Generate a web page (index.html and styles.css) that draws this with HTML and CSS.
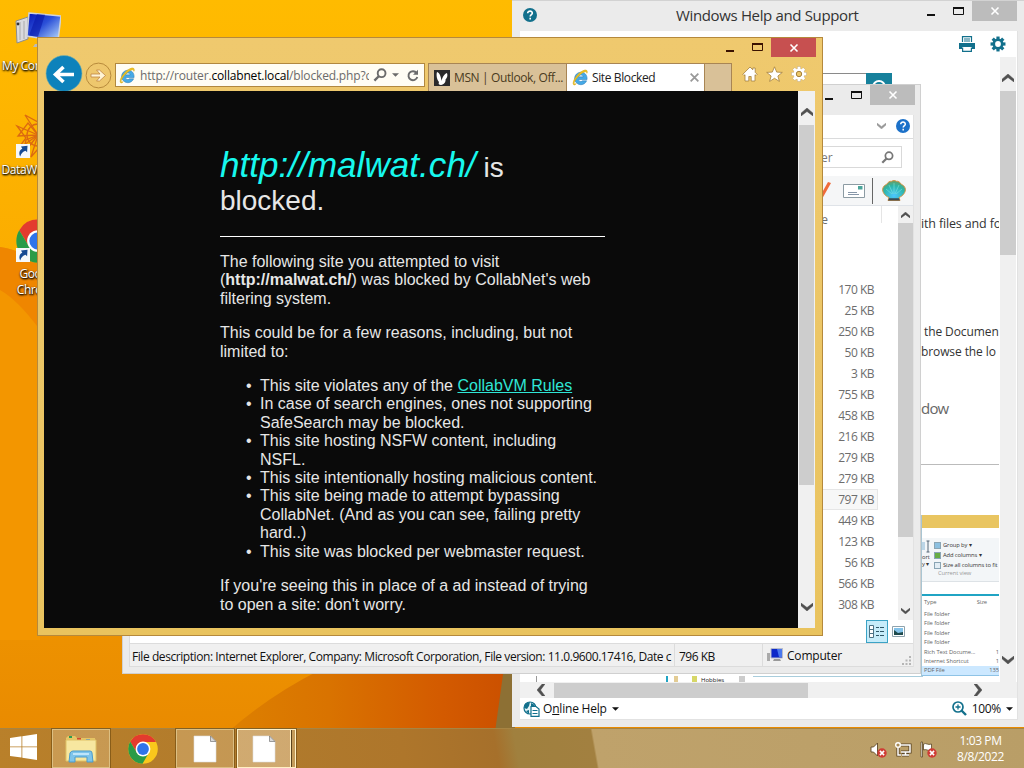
FILE: index.html
```html
<!DOCTYPE html>
<html lang="en">
<head>
  <meta charset="UTF-8">
  <meta name="viewport" content="width=device-width, initial-scale=1.0">
  <title>Site Blocked</title>
  <link rel="stylesheet" href="styles.css">
</head>
<body>
  <svg class="defs" width="0" height="0">
    <defs>
      <linearGradient id="screen" x1="0" y1="0" x2="1" y2="1">
        <stop offset="0" stop-color="#0714b4"/><stop offset=".45" stop-color="#2b50d8"/><stop offset="1" stop-color="#c3e6ff"/>
      </linearGradient>
      <linearGradient id="sky" x1="0" y1="0" x2="0" y2="1">
        <stop offset="0" stop-color="#ffbb00"/><stop offset=".35" stop-color="#fbac00"/><stop offset="1" stop-color="#e88800"/>
      </linearGradient>
      <linearGradient id="dune" x1="0" y1="0" x2="1" y2="0">
        <stop offset="0" stop-color="#dd8000"/><stop offset=".35" stop-color="#d97300"/><stop offset=".75" stop-color="#d35a00"/><stop offset="1" stop-color="#ca4f00"/>
      </linearGradient>
      <radialGradient id="shell" cx=".5" cy=".75" r=".7">
        <stop offset="0" stop-color="#4cc6ff"/><stop offset=".7" stop-color="#2cb5a8"/><stop offset="1" stop-color="#63a06d"/>
      </radialGradient>
    </defs>
    <symbol id="min" viewBox="0 0 10 10"><path d="M1 9h8" stroke="currentColor" stroke-width="2"/></symbol>
    <symbol id="max" viewBox="0 0 11 10"><path d="M.5 1.500h10v7H.5z" fill="none" stroke="currentColor"/><path d="M0 2h11" stroke="currentColor" stroke-width="2"/></symbol>
    <symbol id="x" viewBox="0 0 10 10"><path d="M1.500 1.500l7 7m0-7l-7 7" stroke="currentColor" stroke-width="1.600"/></symbol>
    <symbol id="up" viewBox="0 0 12 8"><path d="M0 8V5.200L6 0l6 5.200V8L6 3.500z" fill="currentColor" stroke="currentColor" stroke-width=".5"/></symbol>
    <symbol id="down" viewBox="0 0 12 8"><path d="M0 0v2.800L6 8l6-5.200V0L6 4.500z" fill="currentColor" stroke="currentColor" stroke-width=".5"/></symbol>
    <symbol id="left" viewBox="0 0 8 12"><path d="M8 0H5.200L0 6l5.200 6H8L3.500 6z" fill="currentColor" stroke="currentColor" stroke-width=".5"/></symbol>
    <symbol id="right" viewBox="0 0 8 12"><path d="M0 0h2.800L8 6l-5.200 6H0l4.500-6z" fill="currentColor" stroke="currentColor" stroke-width=".5"/></symbol>
    <symbol id="caret" viewBox="0 0 8 4"><path d="M0 0h8L4 4z" fill="currentColor"/></symbol>
    <symbol id="lens" viewBox="0 0 14 14"><circle cx="8.600" cy="5.200" r="3.900" fill="none" stroke="currentColor" stroke-width="1.900"/><path d="M6 8l-4.600 4.600" stroke="currentColor" stroke-width="2.400"/></symbol>
    <symbol id="ie" viewBox="0 0 16 16">
      <path d="M14.200 9.900H6.100c.1 2.100 2.700 2.500 3.700 1.200h4C12.600 13.600 10.700 14.800 8.300 14.800A6 6 0 0 1 2.400 8.900 6 6 0 0 1 8.300 3c3.700 0 6.200 2.500 5.900 6.900zM6.200 7.400h4.300c-.2-2.200-4-2.200-4.300 0z" fill="#45a9e6" stroke="#2878b8" stroke-width=".5"/>
      <path d="M1.600 14.800C-.7 12.400 5.500 3.100 11.300 1.200c2.700-.8 3.500.5 2.700 2.800.1-1.200-.6-1.900-2.400-1.200C7.200 4.400 1.600 11.500 2 13.600c.1.700.9.700 2 .2-.9.800-1.900 1.500-2.400 1z" fill="#efc321" stroke="#d9ab18" stroke-width=".6"/>
    </symbol>
    <symbol id="chrome" viewBox="0 0 30 30">
      <circle cx="15" cy="15" r="14.800" fill="#f9c81c"/>
      <path d="M15 .2A14.800 14.800 0 0 0 2.200 7.600L9 19l6-11h13A14.800 14.800 0 0 0 15 .2z" fill="#e33b2e"/>
      <path d="M2.200 7.600A14.800 14.800 0 0 0 14.500 29.800L21 18.500l-12 .5z" fill="#2a9b47"/>
      <circle cx="15" cy="15" r="7.400" fill="#fff"/><circle cx="15" cy="15" r="5.900" fill="#2f74ea"/>
    </symbol>
    <symbol id="shortcut" viewBox="0 0 14 14"><path d="M0 0h14v14H0z" fill="#f6f8fa"/><path d="M4.200 12.500C2.500 9 3.500 5.800 6.300 4.800L5 2.600 11.500 1.800l-.4 6.500-1.600-1.600c-2.600.8-4.200 2.500-5.300 5.800z" fill="#174a92"/></symbol>
    <symbol id="page" viewBox="0 0 24 28"><path d="M1 1h16.500L23 6.500V27H1z" fill="#fff" stroke="#ddd" stroke-width=".6"/><path d="M17.500 1L23 6.500h-5.500z" fill="#d9d9d9" stroke="#777" stroke-width=".7"/></symbol>
    <symbol id="gear" viewBox="0 0 18 18"><g fill="currentColor"><circle cx="9" cy="9" r="6.200"/><path d="M7.200.6h3.600v16.800H7.200z"/><path d="M7.200.6h3.600v16.800H7.200z" transform="rotate(45 9 9)"/><path d="M7.200.6h3.600v16.800H7.200z" transform="rotate(90 9 9)"/><path d="M7.200.6h3.600v16.800H7.200z" transform="rotate(135 9 9)"/></g></symbol>
    <symbol id="nope" viewBox="0 0 10 10"><circle cx="5" cy="5" r="4.700" fill="#cf3c35"/><path d="M2.900 2.900l4.200 4.200m0-4.200L2.900 7.100" stroke="#fff" stroke-width="1.500"/></symbol>
  </svg>

  <div class="desktop">
    <svg class="wallpaper" viewBox="0 0 1024 768" preserveAspectRatio="none">
      <path d="M0 0h1024v768H0z" fill="url(#sky)"/>
      <path d="M0 247Q20 250 40 263V640H0z" fill="#f39600"/>
      <path d="M0 247Q20 250 40 263V330Q18 300 0 290z" fill="#ef8600"/>
      <path d="M228 732Q270 695 320 670H515V732z" fill="url(#dune)"/>
      <path d="M505 660h10v72H495z" fill="#8d7034"/>
    </svg>

    <div class="icons">
      <div class="icon">
        <svg width="46" height="40" viewBox="0 0 46 40">
          <path d="M1 12l12-4v22L2 34z" fill="#d9dadd" stroke="#8d8d8d"/><path d="M5 13v18M9 12v18" stroke="#aaa"/><circle cx="3" cy="15" r="1.400" fill="#333"/>
          <path d="M14 4l32 3-3 25-31-5z" fill="url(#screen)" stroke="#cfd3dd" stroke-width="1.500"/><path d="M22 5l8 .8-7 22-9-1.300z" fill="#0818a8" opacity=".6"/>
          <path d="M20 35h12l2 3H18z" fill="#bbb"/>
        </svg>
        <span>My Computer</span>
      </div>
      <div class="icon wolf">
        <svg width="46" height="50" viewBox="0 0 46 50">
          <g fill="none" stroke="#dc6a10" stroke-width="1.300"><path d="M23 23L10 3l13 7L37 3zM23 23L2 14l9 12-9 12zM23 23l-7 22 7-8 8 8zM23 23l21-9-8 12 8 12z"/><path d="M23 23L3 24l10-13zM23 23L24 3l9 11zM23 23L8 42l3-14z"/><circle cx="23" cy="23" r="11"/></g>
        </svg>
        <svg class="arrow" width="14" height="14"><use href="#shortcut"/></svg>
        <span>DataWorks FX</span>
      </div>
      <div class="icon goog">
        <svg width="44" height="44"><use href="#chrome"/></svg>
        <svg class="arrow" width="14" height="14"><use href="#shortcut"/></svg>
        <span>Google<br>Chrome</span>
      </div>
    </div>

    <div class="window help">
      <div class="titlebar">
        <svg width="14" height="14" viewBox="0 0 14 14"><circle cx="7" cy="7" r="7" fill="#12708c"/><path d="M4.700 5.300c0-3 4.700-2.800 4.600-.1C9.300 6.600 7.200 6.800 7.200 8.600M7.200 9.700v1.700" fill="none" stroke="#fff" stroke-width="1.600"/></svg>
        <span class="title">Windows Help and Support</span>
        <div class="controls"><svg><use href="#min"/></svg><svg><use href="#max"/></svg><b class="close"><svg><use href="#x"/></svg></b></div>
      </div>
      <div class="help-body">
        <div class="help-tools">
          <div class="rounds"><i></i><i></i></div>
          <svg width="16" height="16" viewBox="0 0 16 16"><path d="M3.500 6V.6h9V6M5 3h6M5 5h6" fill="none" stroke="#12708c" stroke-width="1.200"/><path d="M0 7h16v6h-3v-2H3v2H0z" fill="#12708c"/><path d="M3.600 11.500v3.900h8.800v-3.900" fill="none" stroke="#12708c" stroke-width="1.200"/></svg>
          <svg class="teal" width="16" height="16"><use href="#gear"/><circle cx="8" cy="8" r="2.900" fill="#fff"/></svg>
        </div>
        <div class="help-main">
          <div class="doc">
            <div class="help-search"><span><svg width="16" height="16" viewBox="0 0 16 16"><circle cx="8" cy="8" r="6" fill="none" stroke="#fff" stroke-width="2"/></svg></span></div>
            <div class="doc-text">
              <p class="p1">ith files and fo</p>
              <p class="p2">&nbsp;the Documen<br>browse the lo</p>
              <h3>dow</h3>
              <hr>
              <div class="pic">
                <div class="pic-title"></div>
                <div class="pic-ribbon">
                  <div class="sort"><svg width="8" height="14" viewBox="0 0 8 14"><path d="M0 2h3v8H0z" fill="#bcd5e6"/><path d="M6 1v11M4.500 1h3m-3 11h3" stroke="#567" fill="none"/></svg>ort<br>y ▾</div>
                  <div class="cmds"><p><i class="c1"></i>Group by ▾</p><p><i class="c2"></i>Add columns ▾</p><p><i class="c3"></i>Size all columns to fit</p><em>Current view</em></div>
                </div>
                <div class="pic-list">
                  <div class="ph"><span>Type</span><span>Size</span></div>
                  <div>File folder</div><div>File folder</div><div>File folder</div><div>File folder</div>
                  <div>Rich Text Docume...<span>1</span></div><div>Internet Shortcut<span>1</span></div><div class="sel">PDF File<span>135</span></div>
                </div>
              </div>
            </div>
            <div class="strip"><i class="s1"></i><i class="s2"></i><i class="s3"></i><span>Hobbies</span><i class="s4"></i><i class="s5"></i></div>
          </div>
          <div class="vscroll"><svg width="12" height="8"><use href="#up"/></svg><i class="thumb"></i><svg class="end" width="12" height="8"><use href="#down"/></svg></div>
        </div>
        <div class="hscroll"><svg width="8" height="12"><use href="#left"/></svg><i class="thumb"></i><svg class="end" width="8" height="12"><use href="#right"/></svg></div>
        <div class="help-foot">
          <svg width="17" height="16" viewBox="0 0 17 16"><circle cx="7" cy="7" r="6" fill="#e5f3f5" stroke="#12708c" stroke-width="1.200"/><path d="M2 3l5-2-1 4-2 3-3-1zM8 2l4 2-2 3-2-1zM3 10l3-1v4z" fill="#12708c"/><path d="M8 5.500h5l3 2.500v7.400H8z" fill="#fff" stroke="#12708c" stroke-width="1.200"/><path d="M9.500 9.500h5m-5 3h5" stroke="#12708c"/></svg>
          <span class="online">O<u>n</u>line Help</span><svg width="7" height="4"><use href="#caret"/></svg>
          <svg class="zoomer" width="15" height="15" viewBox="0 0 15 15"><circle cx="6" cy="6" r="5" fill="none" stroke="#12708c" stroke-width="1.700"/><path d="M6 3.500v5M3.500 6h5" stroke="#12708c" stroke-width="1.300"/><path d="M9.500 9.500l4.500 4.500" stroke="#12708c" stroke-width="2.400"/></svg>
          <span class="pct">100%</span><svg width="7" height="4"><use href="#caret"/></svg>
        </div>
      </div>
    </div>

    <div class="window explorer">
      <div class="titlebar"><div class="controls"><svg><use href="#min"/></svg><svg><use href="#max"/></svg><b class="close"><svg><use href="#x"/></svg></b></div></div>
      <div class="ex-body">
        <div class="ex-menu">
          <svg class="chev" width="9" height="6"><use href="#down"/></svg>
          <svg width="14" height="14" viewBox="0 0 14 14"><circle cx="7" cy="7" r="7" fill="#1c71c9"/><path d="M4.700 5.300c0-3 4.700-2.800 4.600-.1C9.300 6.600 7.200 6.800 7.200 8.600M7.200 9.700v1.700" fill="none" stroke="#fff" stroke-width="1.500"/></svg>
        </div>
        <div class="ex-search"><div><span>er</span><svg width="13" height="13"><use href="#lens"/></svg></div></div>
        <div class="ex-tools">
          <svg width="14" height="22" viewBox="0 0 14 22"><path d="M1 18L10 2l3 1-9 16-3 2z" fill="#ef6b3a"/></svg>
          <svg class="mail" width="22" height="14" viewBox="0 0 22 14"><path d="M.5.500h21v13H.5z" fill="#fff" stroke="#8c9ba3"/><path d="M15 2h4.500v3.500H15z" fill="#4aa59a"/><path d="M5 8.500h9M5 10.500h11" stroke="#8796a8"/></svg>
          <i></i>
          <svg width="24" height="21" viewBox="0 0 24 21"><path d="M6 20.500l1-3C3 16 0 12 .7 8.500 1.500 6 3 5 4.500 4.500 6 2 8 1 9.500 1.300 11 .3 13 .3 14.500 1.300 16 1 18 2 19.500 4.500 21 5 22.500 6 23.300 8.500 24 12 21 16 17 17.500l1 3z" fill="url(#shell)" stroke="#d59548"/><path d="M12 14V3M11 14L7 5M13 14l4-9M10 14L4 9M14 14l6-5" stroke="#7fe6dc" stroke-width=".7" opacity=".8"/><path d="M7 18.200h10l1 2.300H6z" fill="#3b4b55"/></svg>
        </div>
        <div class="ex-list">
          <div class="col">
            <div class="col-head">Size</div>
            <ul>
              <li>170 KB</li><li>25 KB</li><li>250 KB</li><li>50 KB</li><li>3 KB</li><li>755 KB</li><li>458 KB</li><li>216 KB</li>
              <li>279 KB</li><li>279 KB</li><li class="hover">797 KB</li><li>449 KB</li><li>123 KB</li><li>56 KB</li><li>566 KB</li><li>308 KB</li>
            </ul>
          </div>
          <div class="vscroll"><svg width="9" height="6"><use href="#up"/></svg><i class="thumb"></i><svg class="end" width="9" height="6"><use href="#down"/></svg></div>
        </div>
        <div class="ex-views">
          <b><svg width="16" height="13" viewBox="0 0 16 13"><path d="M.5.500h4v12h-4zM.5 4.500h4m-4 4h4" fill="#fff" stroke="#4c7285"/><path d="M7 2.500h3m1 0h4M7 6.500h3m1 0h4M7 10.500h3m1 0h4" stroke="#2f5667"/></svg></b>
          <svg width="13" height="11" viewBox="0 0 13 11"><path d="M.5.500h12v10H.5z" fill="#fff" stroke="#8fa3ad"/><path d="M2 2h9v7H2z" fill="#84c3ea"/><path d="M2 9V4l4 3 5-1v3z" fill="#1f4a4c"/></svg>
        </div>
        <div class="ex-status">
          <span class="desc">File description: Internet Explorer, Company: Microsoft Corporation, File version: 11.0.9600.17416, Date c</span>
          <span class="size">796 KB</span>
          <span class="zone"><svg width="16" height="14" viewBox="0 0 16 14"><path d="M0 5h3v8H0z" fill="#aaa"/><path d="M4 .5h11.500v9.500H4z" fill="#0d28c8" stroke="#b8bccb"/><path d="M10 1h5v8h-3z" fill="#4a78ee"/><path d="M7 11h6l1 2H6z" fill="#999"/></svg>Computer</span>
          <svg class="grip" width="9" height="9" viewBox="0 0 9 9"><path d="M7 0h2v2H7zM7 3.500h2v2H7zM7 7h2v2H7zM3.500 3.500h2v2h-2zM3.500 7h2v2h-2zM0 7h2v2H0z" fill="#b5b5b5"/></svg>
        </div>
      </div>
    </div>

    <div class="window browser">
      <div class="titlebar"><div class="controls"><svg><use href="#min"/></svg><svg><use href="#max"/></svg><b class="close"><svg><use href="#x"/></svg></b></div></div>
      <div class="nav">
        <svg class="back" width="38" height="36" viewBox="0 0 38 36"><circle cx="19" cy="18.500" r="18" fill="#0d82bb" stroke="#7db4a8" stroke-width=".6"/><path d="M29 19.500H11M18.500 12l-8 7.500 8 7.500" fill="none" stroke="#fff" stroke-width="3.600"/></svg>
        <svg class="fwd" width="27" height="27" viewBox="0 0 27 27"><circle cx="13.500" cy="13.500" r="12.400" fill="#eec76d" stroke="#b88b3c"/><path d="M6 12h9l-3.500-4h3L20.500 13.500 14.500 19h-3l3.500-4H6z" fill="#fff4d5" stroke="#bf8545" stroke-width=".8"/></svg>
        <div class="address">
          <svg width="17" height="17"><use href="#ie"/></svg>
          <span class="url">http://router.<b>collabnet.local</b>/blocked.php?c</span>
          <svg class="find" width="14" height="14"><use href="#lens"/></svg>
          <svg width="7" height="4"><use href="#caret"/></svg>
          <svg class="reload" width="12" height="13" viewBox="0 0 12 13"><path d="M9.600 4A4.500 4.500 0 1 0 10.300 8" fill="none" stroke="currentColor" stroke-width="1.900"/><path d="M11 .8v5H6z" fill="currentColor"/></svg>
        </div>
        <div class="tabs">
          <div class="tab">
            <svg width="16" height="16" viewBox="0 0 16 16"><path d="M0 0h16v16H0z" fill="#29292b"/><path d="M7 15c-2 0-3-1-2-3C3 10 2 5 3 2c3 1 4 5 4.500 9C8 8 10 4 13 3c1 3 0 5-1.500 6.500C12 12 10 14.500 7 15z" fill="#fff"/></svg>
            <span>MSN | Outlook, Off...</span>
          </div>
          <div class="tab on">
            <svg width="17" height="17"><use href="#ie"/></svg>
            <span>Site Blocked</span>
            <svg class="tx" width="11" height="11"><use href="#x"/></svg>
          </div>
          <div class="tab new"></div>
        </div>
        <div class="tools">
          <svg width="16" height="16" viewBox="0 0 16 16"><path d="M8 1L.8 8.300 2 9.500l1-.8V15h3.800v-4.500h2.400V15H13V8.700l1 .8 1.200-1.200-2-2V2h-2.400v1.800z" fill="#fff" stroke="#a5803c" stroke-width=".8"/></svg>
          <svg width="17" height="16" viewBox="0 0 17 16"><path d="M8.500.8l2.200 5.300 5.600.3-4.400 3.600 1.500 5.400-4.900-3.100-4.900 3.100 1.500-5.400L.7 6.400l5.600-.3z" fill="#fff" stroke="#a5803c" stroke-width=".8"/></svg>
          <svg class="cog" width="16" height="16"><use href="#gear"/><circle cx="8" cy="8" r="2.700" fill="#ecc769" stroke="#a5803c"/></svg>
        </div>
      </div>
      <div class="view">
        <div class="page">
          <h1><em>http://malwat.ch/</em> is blocked.</h1>
          <hr>
          <p>The following site you attempted to visit (<b>http://malwat.ch/</b>) was blocked by CollabNet's web filtering system.</p>
          <p>This could be for a few reasons, including, but not limited to:</p>
          <ul>
            <li>This site violates any of the <a href="#">CollabVM Rules</a></li>
            <li>In case of search engines, ones not supporting SafeSearch may be blocked.</li>
            <li>This site hosting NSFW content, including NSFL.</li>
            <li>This site intentionally hosting malicious content.</li>
            <li>This site being made to attempt bypassing CollabNet. (And as you can see, failing pretty hard..)</li>
            <li>This site was blocked per webmaster request.</li>
          </ul>
          <p>If you're seeing this in place of a ad instead of trying to open a site: don't worry.</p>
        </div>
        <div class="vscroll"><svg width="12" height="8"><use href="#up"/></svg><i class="thumb"></i><svg class="end" width="12" height="8"><use href="#down"/></svg></div>
      </div>
    </div>

    <div class="taskbar">
      <div class="start"><svg width="27" height="26" viewBox="0 0 27 26"><path d="M0 4l11.500-1.700v10.200H0zM12.300 2.200L27 0v12.500H12.300zM0 13.300h11.500v10.200L0 21.900zM12.300 13.300H27V26l-14.700-2.200z" fill="#fff"/></svg></div>
      <div class="task open">
        <svg width="32" height="28" viewBox="0 0 32 28"><path d="M1 3l2-2h7l2 2h18v4H1z" fill="#e6c565"/><path d="M4 1h3v2H4z" fill="#2c9c54"/><path d="M12 3h4v2h-4z" fill="#d5482f"/><path d="M21 4h4v2h-4z" fill="#3d8de0"/><path d="M1 5h30v21H1z" fill="#f7e7a0" stroke="#dfc267"/><path d="M4 27l1-9q1-2 3-2h17q2 0 2 2l1 9h-6v-5H10v5z" fill="#7ec4ea" stroke="#4b9bcb"/><path d="M8 19h16" stroke="#d5f0ff" stroke-width="1.500"/></svg>
      </div>
      <div class="task"><svg width="30" height="30"><use href="#chrome"/></svg></div>
      <div class="task open"><svg width="24" height="28"><use href="#page"/></svg></div>
      <div class="task open active"><svg width="24" height="28"><use href="#page"/></svg></div>
      <div class="tray">
        <svg width="17" height="17" viewBox="0 0 17 17"><path d="M1 6h2.500L7.500 2v13l-4-4H1z" fill="#fff" stroke="#5d4726" stroke-width=".9"/><use href="#nope" x="7" y="7" width="10" height="10"/></svg>
        <svg width="17" height="17" viewBox="0 0 17 17"><g fill="none" stroke="#5d4726" stroke-width="3.200"><path d="M6 4h9v7H6M7 14h7M10.500 11v3M3 7v7h3"/></g><g fill="none" stroke="#fff" stroke-width="1.500"><path d="M6 4h9v7H6M7 14h7M10.500 11v3M3 7v7h3"/></g><circle cx="3" cy="4" r="2.300" fill="#a88a55" stroke="#fff" stroke-width="1.400"/></svg>
        <svg width="17" height="17" viewBox="0 0 17 17"><path d="M1 1h1.500v15H1zM3.500 3c3-1.500 4 1.500 8 0v6c-4 1.500-5-1.500-8 0z" fill="#fff" stroke="#5d4726" stroke-width=".8"/><use href="#nope" x="7" y="7" width="10" height="10"/></svg>
      </div>
      <div class="clock">1:03 PM<br>8/8/2022</div>
    </div>
  </div>
</body>
</html>
```

FILE: styles.css
```css
* {
  box-sizing: border-box;
}
body {
  margin: 0;
  font-family: "Open Sans", "Noto Sans", sans-serif;
  font-size: 12px;
  color: #111;
}
svg {
  display: block;
  flex-shrink: 0;
}
p, h1, h3, ul {
  margin: 0;
  padding: 0;
}
i, em {
  font-style: normal;
}
.defs {
  position: absolute;
}
.desktop {
  position: relative;
  width: 1024px;
  height: 768px;
  overflow: hidden;
  background: #fdb000;
}
.wallpaper {
  position: absolute;
  inset: 0;
  width: 100%;
  height: 100%;
}

/* desktop icons */
.icons {
  position: relative;
  width: 76px;
  padding-top: 9px;
}
.icon {
  position: relative;
  display: flex;
  flex-direction: column;
  align-items: center;
  height: 103px;
  color: #fff;
  line-height: 16px;
  letter-spacing: -0.4px;
  text-align: center;
  white-space: nowrap;
  text-shadow: 1px 1px 2px #000, 0 1px 2px #000;
}
.icon span {
  margin-top: 9px;
}
.wolf span {
  margin-top: 0;
}
.goog {
  padding-top: 4px;
}
.goog span {
  margin-top: 3px;
}
.arrow {
  position: absolute;
  left: 16px;
  top: 32px;
}
.goog .arrow {
  top: 33px;
}

/* windows */
.window {
  position: absolute;
  display: flex;
  flex-direction: column;
}
.titlebar {
  display: flex;
  flex-shrink: 0;
}
.controls {
  display: flex;
  margin-left: auto;
  height: 20px;
}
.controls svg {
  width: 10px;
  height: 10px;
  margin: 5px 17px 0 0;
}
.controls svg:nth-child(2) {
  width: 11px;
  margin-right: 8px;
}
.close {
  display: flex;
  align-items: center;
  justify-content: center;
  width: 45px;
  margin-left: 0;
  background: #bcbcbc;
  color: #fff;
}
.controls .close svg {
  margin: 0;
}
.vscroll {
  display: flex;
  flex-direction: column;
  align-items: center;
  flex-shrink: 0;
  background: #f0f0f0;
  color: #505050;
}
.thumb {
  background: #cdcdcd;
  flex-shrink: 0;
}
.vscroll .thumb {
  width: 100%;
}
.end {
  margin-top: auto;
}

/* help and support */
.help {
  left: 512px;
  top: 0;
  width: 512px;
  height: 727px;
  padding: 0 6px 7px 8px;
  background: #ebebeb;
  border-top: 1px solid #d2d2d2;
}
.help .titlebar {
  height: 30px;
  padding: 0 1px 0 3px;
}
.help .titlebar > svg {
  margin-top: 7px;
}
.title {
  margin: 4px 0 0 139px;
  font-size: 15px;
  line-height: 20px;
  letter-spacing: -0.35px;
  color: #333;
  white-space: nowrap;
}
.help-body {
  flex: 1;
  display: flex;
  flex-direction: column;
  background: #fff;
  border: 1px solid #e2e2e2;
  border-width: 0 1px 1px 0;
}
.help-tools {
  display: flex;
  height: 26px;
  padding-right: 11px;
  align-items: center;
}
.help-tools .rounds {
  display: flex;
  gap: 14px;
  margin: 20px auto 0 5px;
}
.rounds i {
  width: 17px;
  height: 17px;
  border: 2px solid #999;
  border-radius: 50%;
}
.help-tools svg + svg {
  margin-left: 15px;
}
.teal {
  color: #12708c;
}
.help-main {
  display: flex;
  height: 625px;
}
.doc {
  width: 479px;
  overflow: hidden;
}
.help-search {
  margin: 16px 0 0 200px;
  width: 172px;
  height: 24px;
  border: 1px solid #8a8a8a;
  display: flex;
  justify-content: flex-end;
}
.help-search span {
  width: 26px;
  margin: -1px -1px 0 0;
  padding: 6px 5px;
  background: #16819c;
}
.doc-text {
  padding-left: 401px;
  white-space: nowrap;
  line-height: 20px;
  letter-spacing: -0.1px;
  color: #333;
}
.p1 {
  margin-top: 117px;
  font-size: 12.500px;
  letter-spacing: -0.15px;
}
.p2 {
  margin-top: 88px;
}
.doc-text h3 {
  margin-top: 34px;
  font-size: 15px;
  font-weight: 400;
  line-height: 24px;
  letter-spacing: -0.8px;
  color: #666;
}
.doc-text hr {
  margin: 44px 0 50px;
  border: 0;
  border-top: 1px solid #bbb;
}
.pic {
  font-size: 5.800px;
  letter-spacing: -0.1px;
  color: #333;
  border-left: 1px solid #a9c5d2;
}
.pic-title {
  height: 13px;
  background: #e9c561;
}
.pic-ribbon {
  display: flex;
  height: 44px;
  margin: 10px 0 12px;
  padding-top: 2px;
  background: #f3f6f8;
  border-bottom: 1px solid #dde2e6;
  line-height: 7px;
}
.sort {
  width: 12px;
}
.cmds p {
  display: flex;
  align-items: center;
  gap: 2px;
  height: 10px;
}
.cmds i {
  width: 7px;
  height: 7px;
  background: #8cc0e0;
  border: 1px solid #8aa5b4;
}
.cmds .c2 {
  background: #68ad45;
}
.cmds .c3 {
  background: #e2edf4;
}
.cmds em {
  display: block;
  margin-left: 4px;
  color: #999;
}
.pic-list {
  border-top: 2px solid #20a4c4;
  color: #666;
}
.pic-list div {
  display: flex;
  justify-content: space-between;
  height: 9.400px;
  padding-left: 2px;
  line-height: 9px;
}
.pic-list .ph {
  height: 14px;
  padding-top: 2px;
  padding-right: 12px;
}
.pic-list .sel {
  background: #cce8ff;
  border-bottom: 1px solid #8ec3e6;
}
.strip {
  display: flex;
  height: 6px;
  padding-left: 16px;
  font-size: 6px;
  line-height: 8px;
}
.strip i {
  height: 6px;
}
.s1 {
  width: 130px;
  border-left: 1px solid #999;
}
.s2 {
  width: 2px;
  background: #20a4c4;
}
.s3 {
  width: 4px;
  margin: 0 14px 0 6px;
  background: #e3cc94;
}
.strip span {
  width: 40px;
  padding-left: 4px;
  border-left: 5px solid #d7d768;
}
.s4 {
  width: 6px;
  margin-left: 7px;
  background: #ccc;
}
.strip .s5 {
  width: 170px;
  height: 1px;
  margin-left: 8px;
  background: #a9cddc;
}
.help .vscroll {
  width: 16px;
  margin-left: 1px;
  padding: 17px 0 18px;
}
.help .vscroll .thumb {
  height: 164px;
  margin-top: 9px;
}
.hscroll {
  display: flex;
  align-items: center;
  height: 16px;
  padding: 0 35px 0 17px;
  background: #f0f0f0;
  color: #505050;
}
.hscroll .thumb {
  width: 254px;
  height: 15px;
  margin-left: 9px;
}
.hscroll .end {
  margin: 0 0 0 auto;
}
.help-foot {
  display: flex;
  align-items: center;
  height: 21px;
  padding: 0 4px 0 3px;
}
.online {
  margin: 0 5px 0 3px;
  letter-spacing: -0.2px;
}
.zoomer {
  margin-left: auto;
}
.pct {
  margin: 0 5px;
  letter-spacing: -0.3px;
}

/* file explorer */
.explorer {
  left: 122px;
  top: 84px;
  width: 799px;
  height: 590px;
  padding: 0 6px 7px 6px;
  background: #ebebeb;
  border: 1px solid #d0d0d0;
}
.explorer .titlebar {
  height: 30px;
  margin-right: -1px;
}
.ex-body {
  flex: 1;
  background: #fff;
  border: 1px solid #dcdcdc;
  border-top: 0;
  border-right-color: #e2e2e2;
}
.ex-menu {
  display: flex;
  justify-content: flex-end;
  align-items: center;
  gap: 10px;
  height: 24px;
  padding: 0 3px 2px 0;
  border-bottom: 1px solid #dadbdc;
}
.chev {
  color: #999;
}
.ex-search {
  display: flex;
  justify-content: flex-end;
  height: 37px;
  padding: 7px 11px 0 0;
}
.ex-search div {
  display: flex;
  align-items: center;
  justify-content: space-between;
  width: 182px;
  height: 22px;
  padding: 0 7px 0 100px;
  border: 1px solid #d9d9d9;
  color: #777;
}
.ex-tools {
  display: flex;
  align-items: center;
  justify-content: flex-end;
  height: 30px;
  padding-right: 7px;
  background: #f5f6f7;
  border-bottom: 1px solid #dfe3e8;
}
.ex-tools .mail {
  margin-left: 11px;
}
.ex-tools i {
  width: 1px;
  height: 26px;
  margin: 0 9px 0 7px;
  background: #666;
}
.ex-list {
  display: flex;
  justify-content: flex-end;
  height: 414px;
  color: #6d6d6d;
}
.col {
  width: 92px;
  margin-right: 16px;
}
.col-head {
  height: 17px;
  padding: 4px 0 0 16px;
  border-right: 1px solid #e5e5e5;
  line-height: 20px;
}
.col ul {
  padding-top: 56px;
  list-style: none;
}
.col li {
  height: 21px;
  margin-right: 4px;
  padding-right: 4px;
  line-height: 21px;
  letter-spacing: -0.5px;
  text-align: right;
}
.col li.hover {
  background: #f7f7f7;
  border: 1px solid #e6e6e6;
  padding-right: 3px;
  line-height: 19px;
}
.explorer .vscroll {
  width: 15px;
  padding: 6px 0;
}
.explorer .vscroll .thumb {
  height: 314px;
  margin-top: 5px;
}
.ex-views {
  display: flex;
  justify-content: flex-end;
  align-items: center;
  gap: 4px;
  height: 23px;
  padding-right: 8px;
}
.ex-views b {
  display: flex;
  align-items: center;
  justify-content: center;
  width: 22px;
  height: 23px;
  background: #c6ecfa;
  border: 1px solid #3ba3c6;
}
.ex-status {
  display: flex;
  height: 23px;
  background: #f0f0f0;
  border-top: 1px solid #dcdcdc;
  line-height: 25px;
  white-space: nowrap;
}
.ex-status span {
  border-right: 1px solid #dcdcdc;
}
.ex-status .desc {
  width: 545px;
  padding-left: 2px;
  overflow: hidden;
  letter-spacing: -0.43px;
}
.ex-status .size {
  width: 88px;
  padding-left: 4px;
  letter-spacing: -0.5px;
}
.ex-status .zone {
  display: flex;
  align-items: center;
  gap: 4px;
  padding-left: 4px;
  border: 0;
  letter-spacing: -0.2px;
}
.grip {
  margin: 12px 2px 0 auto;
}

/* internet explorer */
.browser {
  left: 37px;
  top: 37px;
  width: 786px;
  height: 599px;
  padding: 0 6px 6px;
  background: linear-gradient(#efc96e, #e9c35e);
  border: 1px solid #b5893c;
}
.browser .titlebar {
  height: 18px;
}
.browser .controls {
  height: 19px;
  color: #3a1200;
}
.browser .controls > svg {
  margin-top: 4px;
}
.browser .close {
  background: #c75050;
  color: #fff;
}
.nav {
  display: flex;
  height: 35px;
  align-items: flex-end;
}
.back {
  margin-left: 1px;
}
.fwd {
  margin: 0 3px 2px 2px;
}
.address {
  display: flex;
  align-items: center;
  width: 310px;
  height: 24px;
  margin: 0 3px 4px 0;
  padding: 0 5px 0 3px;
  background: #fffdf4;
  border: 1px solid #b1883f;
  color: #6b6b6b;
}
.url {
  width: 229px;
  margin-left: 4px;
  overflow: hidden;
  white-space: nowrap;
  letter-spacing: -0.17px;
}
.url b {
  font-weight: 400;
  color: #000;
}
.find {
  margin: 0 5px 0 auto;
}
.reload {
  margin-left: 8px;
}
.tabs {
  display: flex;
  width: 304px;
  height: 28px;
  border: 1px solid #a88554;
  border-bottom: 0;
}
.tab {
  display: flex;
  align-items: center;
  gap: 4px;
  width: 137px;
  padding-left: 5px;
  background: #d9c198;
  color: #4a3b21;
  white-space: nowrap;
  letter-spacing: -0.38px;
}
.tab.on {
  width: 139px;
  gap: 3px;
  padding-right: 4px;
  background: #fff;
  border: 1px solid #a88554;
  border-width: 0 1px;
  color: #222;
}
.tab.new {
  width: 26px;
}
.tx {
  margin-left: auto;
  color: #999;
}
.tools {
  display: flex;
  gap: 8px;
  margin: 0 0 9px 10px;
}
.cog {
  color: #fff;
  filter: drop-shadow(0 0 .6px #7b571a);
}
.view {
  display: flex;
  height: 537px;
  overflow: hidden;
}
.page {
  width: 754px;
  padding: 54px 193px 0 176px;
  background: #0a0a0a;
  color: #e6e6e6;
  font: 16px/18.400px "Liberation Sans", Arial, sans-serif;
}
.page h1 {
  font-size: 28px;
  font-weight: 400;
  line-height: normal;
}
.page h1 em {
  font-size: 35px;
  font-style: italic;
  letter-spacing: 0.05px;
  color: #17f8ee;
}
.page hr {
  margin: 19px 0 16px;
  border: 0;
  border-top: 1px solid #fff;
}
.page p, .page ul {
  margin-bottom: 16px;
}
.page ul {
  padding-left: 40px;
  list-style: none;
}
.page li::before {
  content: "•";
  float: left;
  width: 14px;
  margin-left: -14px;
}
.page a {
  color: #2fe6d6;
}
.browser .vscroll {
  width: 17px;
  padding: 17px 0 17px;
}
.browser .vscroll .thumb {
  height: 360px;
  margin-top: 9px;
  width: 15px;
}

/* taskbar */
.taskbar {
  position: absolute;
  left: 0;
  top: 728px;
  display: flex;
  width: 1024px;
  height: 40px;
  background: linear-gradient(80deg, #b9802a 0, #b07a2c 280px, #ae762b 400px, #a6702b 492px, #a0803e 512px, #a28040 588px, #bfa26b 590px, #b99e67 100%);
  border-top: 1px solid #a78443;
}
.start {
  width: 52px;
  padding: 5px 0 0 10px;
}
.task {
  display: flex;
  align-items: center;
  justify-content: center;
  width: 58px;
  margin-right: 4px;
}
.task.open {
  background: rgba(255, 235, 200, 0.25);
  border: 1px solid #dcbf83;
  outline: 1px solid rgba(70, 45, 0, 0.4);
}
.task.active {
  width: 59px;
  margin-left: -1px;
  padding-right: 5px;
  background: linear-gradient(90deg, rgba(255, 240, 215, 0.4) 52px, #fff0c5 52px, #fff0c5 53px, #5b431d 53px, #5b431d 54px, #c49c5b 54px);
  border: 1px solid #fff0c5;
}
.tray {
  display: flex;
  gap: 8px;
  margin: 12px 0 0 auto;
}
.clock {
  width: 87px;
  padding: 4px 0 0;
  color: #fff;
  line-height: 16px;
  letter-spacing: -0.4px;
  text-align: center;
}
```
